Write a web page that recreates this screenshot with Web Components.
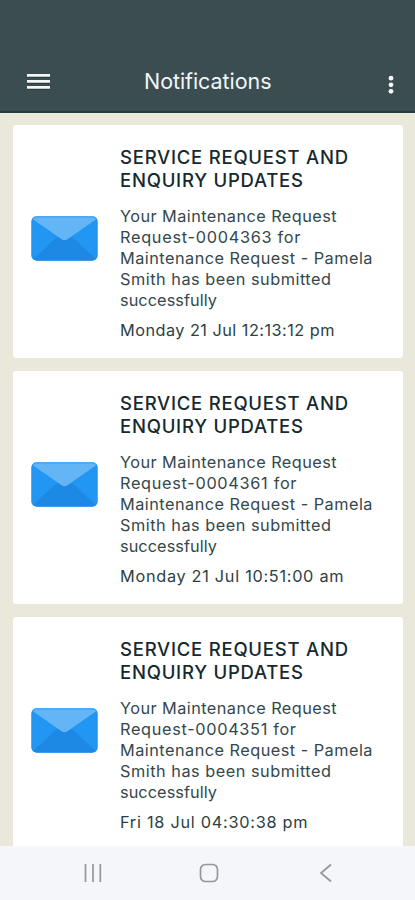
<!DOCTYPE html>
<html lang="en">
<head>
<meta charset="utf-8">
<title>Notifications</title>
<style>
html, body { margin: 0; height: 100%; }
body { font-family: Inter, "Open Sans", sans-serif; overflow: hidden; }
</style>
</head>
<body>
<notifications-app></notifications-app>
<script>
// One line of text, tracked so that it fills the width given in its "w" attribute.
class FitLine extends HTMLElement {
  constructor() {
    super();
    this.attachShadow({ mode: 'open' }).innerHTML =
      '<style>:host { display: block; } span { display: block; width: max-content; white-space: nowrap; }</style><span><slot></slot></span>';
  }
  connectedCallback() {
    const span = this.shadowRoot.querySelector('span');
    const w = parseFloat(this.getAttribute('w'));
    const n = this.textContent.length;
    if (w && n > 1) span.style.letterSpacing = (w - span.getBoundingClientRect().width) / (n - 1) + 'px';
  }
}

class MailIcon extends HTMLElement {
  constructor() {
    super();
    this.attachShadow({ mode: 'open' }).innerHTML = `
      <style>:host { display: block; width: 67px; height: 45px; } svg { display: block; }</style>
      <svg width="67" height="45" viewBox="0 0 67 45">
        <clipPath id="c"><rect x=".5" y=".5" width="66" height="44" rx="5"/></clipPath>
        <g clip-path="url(#c)">
          <rect width="67" height="45" fill="#2196f3"/>
          <path d="M0 45L26 21l7.500 3 7.500-3 26 24z" fill="#1e88e5"/>
          <path d="M0 2V0h67v2L36 23.500q-2.500 1.600-5 0z" fill="#64b5f6"/>
          <rect x=".5" y=".5" width="66" height="44" rx="5" fill="none" stroke="#2490ec" stroke-width="1.400"/>
        </g>
      </svg>`;
  }
}

class AppBar extends HTMLElement {
  constructor() {
    super();
    this.attachShadow({ mode: 'open' }).innerHTML = `
      <style>
        :host { display: grid; grid-template-columns: 27px 117px 1fr 30px; align-items: start; box-sizing: border-box;
          height: 113px; padding-top: 68px; background: #3b4d50; border-bottom: 2px solid #213d42; color: #f0f6f8; }
        .title { grid-area: 1 / 3; font-size: 21.500px; line-height: 27px; }
        svg { display: block; grid-row: 1; }
        .menu { grid-column: 2; margin-top: 5px; }
        .more { grid-column: 4; margin-top: 7px; }
      </style>
      <svg class="menu" width="24" height="17" viewBox="0 0 24 17">
        <path d="M0 3h23M0 9h23M0 15h23" stroke="#142a30" stroke-width="3.600" opacity=".55"/>
        <path d="M0 2.400h23M0 8.400h23M0 14.400h23" stroke="#f3f7f8" stroke-width="2.700"/>
      </svg>
      <div class="title"><slot></slot></div>
      <svg class="more" width="12" height="20" viewBox="0 0 12 20" fill="#f3f7f8">
        <circle cx="6" cy="3.200" r="2.400"/><circle cx="6" cy="9.800" r="2.400"/><circle cx="6" cy="16.300" r="2.400"/>
      </svg>`;
  }
}

class NoticeCard extends HTMLElement {
  constructor() {
    super();
    this.attachShadow({ mode: 'open' }).innerHTML = `
      <style>
        :host { display: grid; grid-template-columns: 107.500px 1fr; box-sizing: border-box; height: 233.500px; flex: none;
          background: #fff; border-radius: 3px; }
        mail-icon { margin: 91px 0 0 18.500px; }
        .text { padding-top: 21px; }
        .head { font-size: 18.500px; font-weight: 500; line-height: 23.200px; color: #15292e; }
        .body { margin-top: 13.600px; font-size: 16.300px; line-height: 21px; color: #34474b; }
        .time { margin-top: 9px; font-size: 16.300px; line-height: 21px; color: #2c3f43; }
      </style>
      <mail-icon></mail-icon>
      <div class="text">
        <div class="head"><slot name="head"></slot></div>
        <div class="body"><slot></slot></div>
        <div class="time"><slot name="time"></slot></div>
      </div>`;
  }
}

class NavBar extends HTMLElement {
  constructor() {
    super();
    this.attachShadow({ mode: 'open' }).innerHTML = `
      <style>
        :host { display: grid; grid-template-columns: 83px 115px 116px 1fr; height: 54px; background: #f5f6f9; align-items: start; }
        svg { display: block; margin-top: 15px; }
      </style>
      <i></i>
      <svg width="20" height="24" fill="none" stroke="#949698" stroke-width="1.700"><path d="M2.500 3v18M10 3v18M17.300 3v18"/></svg>
      <svg width="24" height="24" fill="none" stroke="#949698" stroke-width="1.700"><rect x="2.500" y="3.500" width="17" height="17" rx="5"/></svg>
      <svg width="20" height="24" fill="none" stroke="#949698" stroke-width="1.700"><path d="M17 3.500L7 12 17 20.500"/></svg>`;
  }
}

class NotificationsApp extends HTMLElement {
  constructor() {
    super();
    const card = (no, bodyW, time, timeW) => `
      <notice-card>
        <fit-line slot="head" w="228">SERVICE REQUEST AND</fit-line>
        <fit-line slot="head" w="183">ENQUIRY UPDATES</fit-line>
        <fit-line w="216.500">Your Maintenance Request</fit-line>
        <fit-line w="${bodyW}">Request-${no} for</fit-line>
        <fit-line w="252.500">Maintenance Request - Pamela</fit-line>
        <fit-line w="211">Smith has been submitted</fit-line>
        <fit-line w="97">successfully</fit-line>
        <fit-line slot="time" w="${timeW}">${time}</fit-line>
      </notice-card>`;
    this.attachShadow({ mode: 'open' }).innerHTML = `
      <style>
        :host { display: flex; flex-direction: column; height: 900px; width: 415px; background: #e9e8db; }
        main { flex: 1; min-height: 0; overflow: hidden; display: flex; flex-direction: column; gap: 12.500px; padding: 11.600px 12px 0 12.500px; }
      </style>
      <app-bar><fit-line w="127.500">Notifications</fit-line></app-bar>
      <main>
        ${card('0004363', 180.5, 'Monday 21 Jul 12:13:12 pm', 214.5)}
        ${card('0004361', 176.5, 'Monday 21 Jul 10:51:00 am', 223.5)}
        ${card('0004351', 176, 'Fri 18 Jul 04:30:38 pm', 187.5)}
      </main>
      <nav-bar></nav-bar>`;
  }
}

customElements.define('mail-icon', MailIcon);
customElements.define('app-bar', AppBar);
customElements.define('notice-card', NoticeCard);
customElements.define('nav-bar', NavBar);
customElements.define('notifications-app', NotificationsApp);
customElements.define('fit-line', FitLine);
</script>
</body>
</html>
